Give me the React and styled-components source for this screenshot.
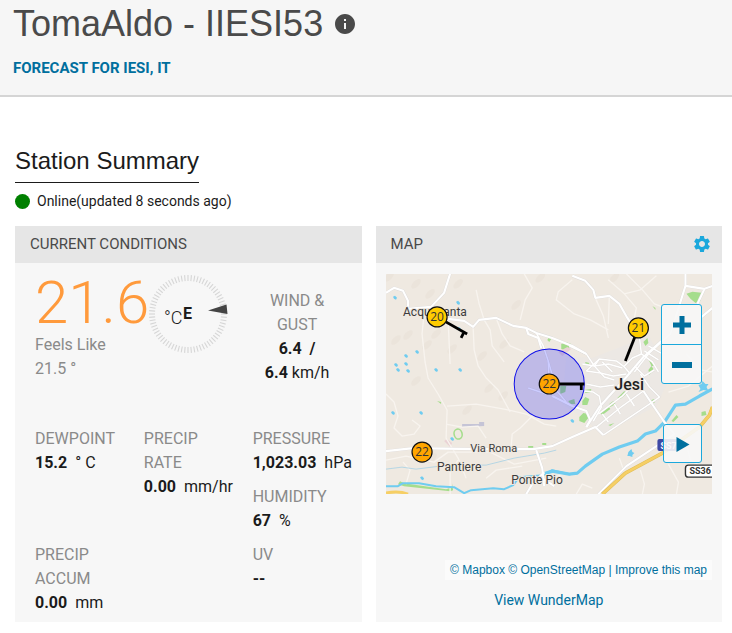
import { useState } from 'react'
import styled, { createGlobalStyle } from 'styled-components'
import { MdInfo, MdSettings } from 'react-icons/md'

const ticks = Array.from({ length: 72 }, (_, i) => i * 5)

const stations = [
    { x: 51, y: 43, temp: 20, fill: '#ffcc00', stem: 'M51 43 L81 60 M78 58 L75 64' },
    { x: 252, y: 54, temp: 21, fill: '#ffcc00', stem: 'M252 54 L239 87' },
    { x: 163, y: 110, temp: 22, fill: '#ffa500', stem: 'M163 110 H198 M195 110 V116' },
    { x: 36, y: 178, temp: 22, fill: '#ffa500' },
]

const minorRoads = [
    'M138 0 L146 14 L139 26 L134 46',
    'M90 16 L93 30 L98 46 L104 56 L106 72 L118 88',
    'M22 35 L38 40 L36 60 L39 88 L42 104 L52 120 L61 136 L60 164 L72 184 L80 204',
    'M62 46 L64 90 M87 53 L88 76 L92 92 L100 104 L112 116 L124 138',
    'M61 132 L90 130 L118 135 L140 140 L158 150 L170 152',
    'M60 150 L76 153 L92 152 L100 164',
    'M0 120 L8 128 L12 142 L8 154 L16 162 L28 160 L34 152 L26 146',
    'M148 140 L134 154 L126 160 L125 172',
    'M0 186 L20 182 L48 188 L62 178 L104 178 L128 190 L160 184',
    'M20 210 L24 196 L17 188 M64 220 V198 L72 186 M100 204 L110 196 L136 192',
    'M186 6 L172 18 L170 26 L188 40 L204 46 L222 56',
    'M209 24 L217 42 L222 64 M223 22 L222 50',
    'M222 6 L238 20 L254 16 L270 2 M238 20 L250 34 L246 54 M240 0 L256 16 L268 30 L284 36',
    'M110 44 L116 60 L124 72 L138 78',
    'M166 205 L180 198 M190 220 L196 210 L206 214 M254 196 L258 210 L256 220',
    'M300 170 L304 186 L318 194 M282 190 L292 208 L290 220 M233 184 L238 198',
    'M300 80 L314 96 L326 98 M282 118 L302 112 L326 92',
]

const cityRoads = [
    'M183 72 L200 80 L208 92 L213 85',
    'M200 97 L213 85 L230 87 L238 93 L244 100',
    'M196 90 L208 92 L222 90 L236 94',
    'M253 63 L255 80 L266 88 L272 98',
    'M200 97 L214 99 L227 102 L240 100',
    'M200 110 L214 113 L228 111',
    'M198 117 L207 118 L213 122 L215 133 L207 147',
    'M208 92 L218 103 L228 106 M216 88 L226 98',
    'M217 161 L263 130 L273 123 L263 113 L254 100',
    'M210 153 L236 132 L257 117',
    'M212 140 L236 122 L250 108',
    'M222 148 L216 140 M234 140 L228 130 M248 132 L240 120',
    'M289 44 L284 60 L262 80 L248 98',
    'M258 77 L272 86 M262 72 L276 80',
    'M255 80 L246 84 L238 92 M248 92 L258 102 L268 96',
    'M150 59 L157 72 L162 87 L163 108 L180 128',
    'M162 87 L168 108 M142 114 L160 120',
]

const mainRoads = [
    'M0 19 L8 14 L17 17 L22 27 V35 L45 33 L58 19 L64 0',
    'M62 45 L78 47 L87 53 L93 46 L110 44 L127 52 L140 54 L150 59 L166 64 L186 72 L200 80',
    'M140 54 L142 60 L152 64 L155 74',
    'M186 2 L199 7 L207 16 L209 24 L223 22 L233 30 L241 44 L253 63',
    'M299 0 V12 L289 44 M299 12 L318 15 L326 12 M318 15 L311 30 M326 34 L314 44',
    'M275 67 L257 83 L240 103 L213 133 L200 153',
    'M166 122 L186 132 L200 137 L204 146 L200 153',
    'M0 177 L27 174 L90 175 L147 175 L166 172 L186 163 L209 153 L217 161',
    'M150 176 L156 194 L158 212 M158 198 L146 210 L140 220 M156 204 L168 212',
    'M257 117 L267 132 L278 148 L288 160 L276 168 L240 192 L212 220',
]

const greens = [
    'M300 20 l6 -2 9 1 -1 8 -5 2 -5 -4z', 'M175 70 l4 -2 6 2 -4 7 -6 -2z', 'M161 66 l2 -3 2 2 -2 3z',
    'M193 143 l4 -4 5 1 0 4 -4 5 -5 -2z', 'M196 127 l3 -4 4 2 -2 6 -5 0z', 'M198 116 l7 -1 -1 4 -5 0z',
    'M214 139 l8 -7 2 3 -8 6z', 'M231 124 l7 -7 2 3 -6 5z', 'M223 130 l4 -3 2 3 -5 3z',
    'M262 96 l3 -4 2 3 -4 6z', 'M257 68 l4 -4 1 5 -3 3z', 'M262 85 l6 7 -3 0z', 'M245 110 l4 3 -2 3z',
    'M285 147 l5 -6 2 2 -5 5z', 'M315 138 l4 -1 1 4 -5 1z', 'M182 127 l6 -2 1 5 -5 0z',
    'M265 126 l3 -1 0 4 -3 0z', 'M199 88 l4 1 -1 2 -3 -1z', 'M174 112 l6 0 -1 6 -5 2z',
    'M12 210 l2 -3 4 2 42 6 6 -2 0 -4 1 7 -3 1 -46 -5z',
    'M222 151 l6 -2 -4 3z', 'M266 32 l3 2 0 2z', 'M51 127 l4 1 0 2z', 'M142 172 h5 v2 h-5z M156 169 h4 v2 h-4z',
]

const lakes = [
    [9, 24], [72, 29], [73, 55], [31, 78], [20, 82], [10, 91], [22, 97], [50, 96], [74, 96],
    [35, 139], [7, 139], [66, 165], [36, 204], [12, 96], [20, 90], [186, 147],
]

const hills = [
    [3, 3], [30, 10], [44, 20], [72, 10], [22, 61], [10, 66], [41, 71], [50, 60], [154, 4], [130, 31],
    [228, 4], [103, 114], [117, 122], [81, 136], [96, 82], [66, 75], [30, 107], [46, 184], [118, 70],
]

function StationMap() {
    return (
        <MapDrawing viewBox="0 0 326 220" preserveAspectRatio="xMidYMid slice" role="img" aria-label="Map of stations around Jesi">
            <rect width="326" height="220" fill="#efe9e1" />
            <path d="M180 82 L206 84 L262 62 L285 100 L270 132 L216 160 L194 142 L176 130z" fill="#ece8e4" />
            {hills.map(([x, y]) => (
                <ellipse key={`${x}-${y}`} cx={x} cy={y} rx="6" ry="3" fill="#e5ddd3" opacity="0.4" transform={`rotate(-45 ${x} ${y})`} />
            ))}
            {greens.map((d) => <path key={d} d={d} fill="#a5dd8c" />)}
            <ellipse cx="72" cy="160" rx="4" ry="5" fill="none" stroke="#a5dd8c" strokeWidth="1.6" transform="rotate(-15 72 160)" />
            <path d="M76 150 H93 V148 H98 V152 L76 153z" fill="#c5c4d6" />
            <path d="M58 167 l3 -2 5 4 -2 4z M172 78 l9 -5 4 2 -9 7z" fill="#ead2d5" />
            <g fill="none" strokeLinejoin="round">
                {minorRoads.map((d) => <path key={d} d={d} stroke="#f8f4ef" strokeWidth="1.3" />)}
                <path d="M0 195 L16 193 L30 195 L62 191 L100 191 L128 184 L158 179 L170 176" stroke="#afd4e4" strokeWidth="0.9" />
                <path d="M0 212 L12 212 L17 209 L33 209 L50 212 L68 213 L78 219 L85 216 L107 214 L118 215 L127 211 L133 203 L157 201 L166 196 L183 200 L191 199" stroke="#6fccf0" strokeWidth="2" />
                <path d="M157 200 L166 197 L183 200 L191 199 L199 192 L216 180 L233 173 L251 167 L259 160 L269 157 L278 148 L289 131 L299 130 L313 122 L326 115" stroke="#6fccf0" strokeWidth="3.2" />
                {cityRoads.map((d) => <path key={d} d={d} stroke="#dcd9d6" strokeWidth="2.1" />)}
                {mainRoads.map((d) => <path key={d} d={d} stroke="#dcdada" strokeWidth="2.8" />)}
                {cityRoads.map((d) => <path key={d} d={d} stroke="#fff" strokeWidth="1.5" />)}
                {mainRoads.map((d) => <path key={d} d={d} stroke="#fff" strokeWidth="2.1" />)}
                <path d="M216 220 L239 199 L276 179 L313 153 L323 141 L326 133" stroke="#e0bd57" strokeWidth="3.6" />
                <path d="M216 220 L239 199 L276 179 L313 153 L323 141 L326 133" stroke="#f6cf65" strokeWidth="2.6" />
                <path d="M0 219 Q12 216 22 220" stroke="#f6cf65" strokeWidth="3" />
            </g>
            <g fill="#6fccf0">
                {lakes.map(([x, y]) => <path key={`${x}-${y}`} d={`M${x - 2} ${y - 1} l2 -1 2 2 -1 2 -2 -1z`} />)}
                <path d="M312 111 l3 -1 1 -3 3 3 3 0 -2 3 2 4 -5 -1 -5 2 2 -3z" />
                <path d="M242 178 l3 -3 1 3 2 1 -2 2 0 2 -3 -1 -2 0z" />
            </g>
            <g>
                <rect x="271" y="165" width="20" height="12" rx="2" fill="#3f49a5" />
                <RouteText x="274" y="175" fill="#fff">SS76</RouteText>
                <rect x="303" y="191" width="40" height="12" rx="3" fill="#fff" stroke="#333" strokeWidth="1.4" transform="translate(-4 0)" />
                <RouteText x="303" y="200" fill="#333">SS36</RouteText>
            </g>
            <PlaceText x="17" y="42">Acquasanta</PlaceText>
            <PlaceText x="51" y="197">Pantiere</PlaceText>
            <PlaceText x="125" y="210">Ponte Pio</PlaceText>
            <StreetText x="84" y="178">Via Roma</StreetText>
            <CityText x="228" y="116">Jesi</CityText>
            <circle cx="163" cy="110" r="35" fill="#0000ff" fillOpacity="0.2" stroke="#1010e8" strokeWidth="1" />
            {stations.map((s) => (
                <g key={`${s.x}-${s.y}`}>
                    {s.stem ? <path d={s.stem} stroke="#000" strokeWidth="2.8" fill="none" /> : null}
                    <circle cx={s.x} cy={s.y} r="10" fill={s.fill} stroke="#111" strokeWidth="1.2" />
                    <MarkerText x={s.x} y={s.y + 4}>{s.temp}</MarkerText>
                </g>
            ))}
        </MapDrawing>
    )
}

function WindDial() {
    return (
        <Dial viewBox="0 0 82 82" role="img" aria-label="Wind from E">
            {ticks.map((angle) => (
                <line key={angle} x1="41" y1="2" x2="41" y2="8" stroke="#d6d6d6" strokeWidth="1.1" transform={`rotate(${angle} 41 41)`} />
            ))}
            <path d="M61 37.500 L79.500 31.500 L80.500 41z" fill="#444" />
            <UnitText x="17" y="51">°C</UnitText>
            <DirectionText x="36" y="46">E</DirectionText>
        </Dial>
    )
}

function Reading({ label, value, unit, column, tall }) {
    return (
        <Stat $column={column} $tall={tall}>
            <Label>{label}</Label>
            <Value><strong>{value}</strong>{unit ? <Unit>{unit}</Unit> : null}</Value>
        </Stat>
    )
}

function App() {
    const [playing, setPlaying] = useState(false)

    return (
        <>
            <GlobalStyle />
            <PageHeader>
                <StationTitle>
                    TomaAldo - IIESI53
                    <InfoButton type="button" aria-label="Station information"><MdInfo size={24} /></InfoButton>
                </StationTitle>
                <ForecastLink href="#forecast">FORECAST FOR IESI, IT</ForecastLink>
            </PageHeader>
            <Main>
                <SummaryHeading>Station Summary</SummaryHeading>
                <Status><Dot />Online(updated 8 seconds ago)</Status>
                <Panels>
                    <Panel>
                        <PanelHeader><PanelTitle>CURRENT CONDITIONS</PanelTitle></PanelHeader>
                        <Conditions>
                            <div>
                                <Temperature>21.6</Temperature>
                                <Label>Feels Like<br />21.5 °</Label>
                            </div>
                            <WindDial />
                            <Wind>
                                <Label>WIND &amp; GUST</Label>
                                <Value><strong>6.4 &nbsp;/</strong></Value>
                                <Value><strong>6.4</strong> km/h</Value>
                            </Wind>
                        </Conditions>
                        <Stats>
                            <Reading column={1} label="DEWPOINT" value="15.2" unit="° C" />
                            <Reading column={2} label="PRECIP RATE" value="0.00" unit="mm/hr" tall />
                            <Reading column={3} label="PRESSURE" value="1,023.03" unit="hPa" />
                            <Reading column={3} label="HUMIDITY" value="67" unit="%" />
                            <Reading column={1} label="PRECIP ACCUM" value="0.00" unit="mm" />
                            <Reading column={3} label="UV" value="--" />
                        </Stats>
                    </Panel>
                    <Panel>
                        <PanelHeader>
                            <PanelTitle>MAP</PanelTitle>
                            <SettingsButton type="button" aria-label="Map settings"><MdSettings size={20} /></SettingsButton>
                        </PanelHeader>
                        <MapBody>
                            <MapFrame>
                                <StationMap />
                                <MapControls>
                                    <ZoomGroup>
                                        <MapButton type="button" aria-label="Zoom in">
                                            <svg width="18" height="18" viewBox="0 0 18 18"><path d="M6.500 0h5v6.500H18v5h-6.500V18h-5v-6.500H0v-5h6.500z" /></svg>
                                        </MapButton>
                                        <MapButton type="button" aria-label="Zoom out">
                                            <svg width="20" height="18" viewBox="0 0 20 18"><path d="M0 7h20v6H0z" /></svg>
                                        </MapButton>
                                    </ZoomGroup>
                                    <PlayButton type="button" aria-label="Play" aria-pressed={playing} onClick={() => setPlaying(!playing)}>
                                        <svg width="14" height="16" viewBox="0 0 14 16"><path d="M0.500 1L13.500 8.500L0.500 16z" /></svg>
                                    </PlayButton>
                                </MapControls>
                            </MapFrame>
                            <Attribution>
                                <a href="#mapbox">© Mapbox</a> <a href="#osm">© OpenStreetMap</a> | <a href="#improve">Improve this map</a>
                            </Attribution>
                            <WunderLink href="#wundermap">View WunderMap</WunderLink>
                        </MapBody>
                    </Panel>
                </Panels>
            </Main>
        </>
    )
}

export default App

const GlobalStyle = createGlobalStyle`
    * {
        box-sizing: border-box;
    }

    body {
        margin: 0;
        background: #fff;
        color: #1b1b1b;
        font-family: Roboto, sans-serif;
        font-size: 16px;
        line-height: 24px;
    }

    a {
        color: #006f9e;
        text-decoration: none;
    }

    button {
        padding: 0;
        border: 0;
        background: none;
        cursor: pointer;
    }
`

const PageHeader = styled.header`
    padding: 4px 13px 15px;
    background: #f6f6f6;
    border-bottom: 2px solid #d5d5d5;
`

const StationTitle = styled.h1`
    display: flex;
    align-items: center;
    gap: 10px;
    margin: 0 0 12px;
    color: #4a4a4a;
    font: 400 36px/40px 'Liberation Sans', sans-serif;
`

const InfoButton = styled.button`
    display: flex;
    color: #4a4a4a;
`

const ForecastLink = styled.a`
    display: block;
    font-size: 15px;
    font-weight: 700;
`

const Main = styled.main`
    padding: 49px 10px 11px 15px;
`

const SummaryHeading = styled.h2`
    width: fit-content;
    margin: 0 0 8px;
    padding-bottom: 6px;
    border-bottom: 1px solid #1b1b1b;
    font: 400 24px/30px 'Liberation Sans', sans-serif;
`

const Status = styled.p`
    display: flex;
    align-items: center;
    gap: 7px;
    margin: 0 0 15px;
    font-size: 14px;
    line-height: 20px;
`

const Dot = styled.span`
    width: 15px;
    height: 15px;
    border-radius: 50%;
    background: #008000;
`

const Panels = styled.div`
    display: grid;
    grid-template-columns: 1fr 1fr;
    gap: 14px;
`

const Panel = styled.section`
    min-width: 0;
    background: #f7f7f7;
`

const PanelHeader = styled.header`
    display: flex;
    align-items: center;
    justify-content: space-between;
    height: 37px;
    padding: 0 10px 2px 15px;
    background: #e6e6e6;
`

const PanelTitle = styled.h3`
    margin: 0;
    color: #4a4a4a;
    font-size: 15px;
    font-weight: 400;
`

const SettingsButton = styled.button`
    display: flex;
    color: #1ba8dc;
`

const Conditions = styled.div`
    display: grid;
    grid-template-columns: repeat(3, minmax(0, 1fr));
    margin-bottom: 42px;
    padding: 10px 0 0 20px;
`

const Temperature = styled.div`
    color: #ff9a3c;
    font-size: 60px;
    font-weight: 300;
    line-height: 60px;
    white-space: nowrap;
`

const Dial = styled.svg`
    width: 82px;
    height: 82px;
    margin-left: 3px;
`

const UnitText = styled.text`
    fill: #1b1b1b;
    font-size: 18px;
    font-weight: 300;
`

const DirectionText = styled.text`
    fill: #1b1b1b;
    font-size: 16px;
    font-weight: 700;
`

const Wind = styled.div`
    padding: 16px 20px 0 0;
    text-align: center;
`

const Stats = styled.div`
    display: grid;
    grid-template-columns: repeat(3, minmax(0, 1fr));
    grid-template-rows: 58px 58px auto;
    padding: 0 0 7px 20px;
`

const Stat = styled.div`
    grid-column: ${props => props.$column};
    grid-row: ${props => props.$tall ? 'span 2' : 'auto'};
`

const Label = styled.div`
    max-width: 89px;
    color: #8a8a8a;
`

const Value = styled.div`
    white-space: nowrap;
`

const Unit = styled.span`
    margin-left: 8px;
`

const MapBody = styled.div`
    display: flex;
    flex-direction: column;
    padding: 11px 10px 10px;
`

const MapFrame = styled.div`
    position: relative;
    height: 220px;
    margin-bottom: 66px;
    overflow: hidden;
`

const MapDrawing = styled.svg`
    display: block;
    width: 100%;
    height: 100%;
`

const PlaceText = styled.text`
    fill: #3c3c3c;
    stroke: #efe9e1;
    stroke-width: 2px;
    paint-order: stroke;
    font-size: 12px;
`

const StreetText = styled(PlaceText)`
    font-size: 11px;
`

const CityText = styled(PlaceText)`
    fill: #222;
    font-size: 16px;
    font-weight: 500;
`

const RouteText = styled.text`
    font-size: 9px;
    font-weight: 700;
`

const MarkerText = styled.text`
    fill: #333;
    font-family: 'Open Sans', sans-serif;
    font-size: 12px;
    text-anchor: middle;
`

const MapControls = styled.div`
    position: absolute;
    top: 30px;
    right: 10px;
    display: flex;
    flex-direction: column;
    align-items: flex-end;
    gap: 40px;
`

const ZoomGroup = styled.div`
    width: 41px;
    border: 1px solid #1ba8dc;
    border-radius: 3px;
    background: rgba(247, 247, 247, 0.9);
`

const MapButton = styled.button`
    display: flex;
    align-items: center;
    justify-content: center;
    width: 100%;
    height: 39px;
    fill: #006f9e;

    & + & {
        border-top: 1px solid #1ba8dc;
    }
`

const PlayButton = styled(MapButton)`
    width: 39px;
    border: 1px solid #1ba8dc;
    border-radius: 3px;
    background: rgba(247, 247, 247, 0.9);
`

const Attribution = styled.p`
    align-self: flex-end;
    margin: 0 0 8px;
    padding: 0 5px;
    background: rgba(255, 255, 255, 0.5);
    color: #006f9e;
    font: 12px/20px 'Liberation Sans', sans-serif;
    white-space: nowrap;
`

const WunderLink = styled.a`
    align-self: center;
    font-size: 14px;
`
